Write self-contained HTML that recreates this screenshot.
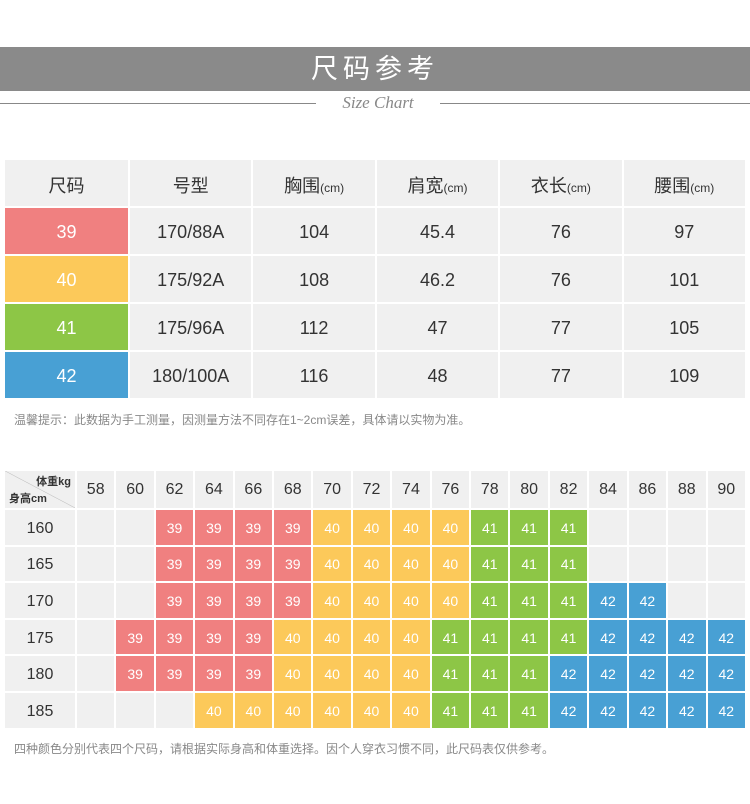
<!DOCTYPE html>
<html><head><meta charset="utf-8"><style>
body{margin:0;width:750px;height:804px;background:#fff;font-family:"Liberation Sans","Noto Sans CJK SC",sans-serif;position:relative;overflow:hidden;color:#333}
.banner{position:absolute;left:0;top:47px;width:750px;height:44px;background:#8a8a8a;color:#fff;font-size:27px;text-align:center;line-height:44px;letter-spacing:5px}
.line{position:absolute;top:103px;height:1px;background:#888}
.sc{position:absolute;top:93px;left:320px;width:116px;text-align:center;font-family:"Liberation Serif",serif;font-style:italic;color:#888;font-size:17px}
table{position:absolute;border-collapse:separate;background:#fff;table-layout:fixed}
td{background:#f0f0f0;text-align:center;padding:0;box-sizing:border-box}
#t1{left:3px;top:158px;width:744px;border-spacing:2px}
#t1 td{height:46px;font-size:18px;padding-top:3px}
#t1 small{font-size:12px}
.r{background:#f08080!important;color:#fff}
.y{background:#fcc95a!important;color:#fff}
.g{background:#8dc646!important;color:#fff}
.b{background:#48a0d4!important;color:#fff}
.note{position:absolute;left:14px;font-size:12px;color:#888}
#t2{left:3px;top:469px;width:744px;border-spacing:2px}
#t2 td{height:34.6px;font-size:14px;padding-top:1px}
#t2 tr:first-child td{height:37px;font-size:16px}
#t2 td.h{font-size:16px;padding-top:3px}
</style></head><body>
<div class="banner">尺码参考</div>
<div class="line" style="left:0;width:316px"></div>
<div class="line" style="left:440px;width:310px"></div>
<div class="sc">Size Chart</div>
<table id="t1">
<colgroup><col style="width:123px"><col><col><col><col><col></colgroup>
<tr><td>尺码</td><td>号型</td><td>胸围<small>(cm)</small></td><td>肩宽<small>(cm)</small></td><td>衣长<small>(cm)</small></td><td>腰围<small>(cm)</small></td></tr>
<tr><td class="r">39</td><td>170/88A</td><td>104</td><td>45.4</td><td>76</td><td>97</td></tr>
<tr><td class="y">40</td><td>175/92A</td><td>108</td><td>46.2</td><td>76</td><td>101</td></tr>
<tr><td class="g">41</td><td>175/96A</td><td>112</td><td>47</td><td>77</td><td>105</td></tr>
<tr><td class="b">42</td><td>180/100A</td><td>116</td><td>48</td><td>77</td><td>109</td></tr>
</table>
<div class="note" style="top:411px">温馨提示：此数据为手工测量，因测量方法不同存在1~2cm误差，具体请以实物为准。</div>
<table id="t2">
<colgroup><col style="width:70px"><col span="17"></colgroup>
<tr><td style="position:relative;background:linear-gradient(to top right,#f0f0f0 49.5%,#bbb 50%,#f0f0f0 51%)"><span style="position:absolute;right:4px;top:2px;font-size:11px;font-weight:bold">体重kg</span><span style="position:absolute;left:4px;bottom:2px;font-size:11px;font-weight:bold">身高cm</span></td><td>58</td><td>60</td><td>62</td><td>64</td><td>66</td><td>68</td><td>70</td><td>72</td><td>74</td><td>76</td><td>78</td><td>80</td><td>82</td><td>84</td><td>86</td><td>88</td><td>90</td></tr>
<tr><td class="h">160</td><td></td><td></td><td class="r">39</td><td class="r">39</td><td class="r">39</td><td class="r">39</td><td class="y">40</td><td class="y">40</td><td class="y">40</td><td class="y">40</td><td class="g">41</td><td class="g">41</td><td class="g">41</td><td></td><td></td><td></td><td></td></tr>
<tr><td class="h">165</td><td></td><td></td><td class="r">39</td><td class="r">39</td><td class="r">39</td><td class="r">39</td><td class="y">40</td><td class="y">40</td><td class="y">40</td><td class="y">40</td><td class="g">41</td><td class="g">41</td><td class="g">41</td><td></td><td></td><td></td><td></td></tr>
<tr><td class="h">170</td><td></td><td></td><td class="r">39</td><td class="r">39</td><td class="r">39</td><td class="r">39</td><td class="y">40</td><td class="y">40</td><td class="y">40</td><td class="y">40</td><td class="g">41</td><td class="g">41</td><td class="g">41</td><td class="b">42</td><td class="b">42</td><td></td><td></td></tr>
<tr><td class="h">175</td><td></td><td class="r">39</td><td class="r">39</td><td class="r">39</td><td class="r">39</td><td class="y">40</td><td class="y">40</td><td class="y">40</td><td class="y">40</td><td class="g">41</td><td class="g">41</td><td class="g">41</td><td class="g">41</td><td class="b">42</td><td class="b">42</td><td class="b">42</td><td class="b">42</td></tr>
<tr><td class="h">180</td><td></td><td class="r">39</td><td class="r">39</td><td class="r">39</td><td class="r">39</td><td class="y">40</td><td class="y">40</td><td class="y">40</td><td class="y">40</td><td class="g">41</td><td class="g">41</td><td class="g">41</td><td class="b">42</td><td class="b">42</td><td class="b">42</td><td class="b">42</td><td class="b">42</td></tr>
<tr><td class="h">185</td><td></td><td></td><td></td><td class="y">40</td><td class="y">40</td><td class="y">40</td><td class="y">40</td><td class="y">40</td><td class="y">40</td><td class="g">41</td><td class="g">41</td><td class="g">41</td><td class="b">42</td><td class="b">42</td><td class="b">42</td><td class="b">42</td><td class="b">42</td></tr>
</table>
<div class="note" style="top:740px">四种颜色分别代表四个尺码，请根据实际身高和体重选择。因个人穿衣习惯不同，此尺码表仅供参考。</div>
</body></html>
